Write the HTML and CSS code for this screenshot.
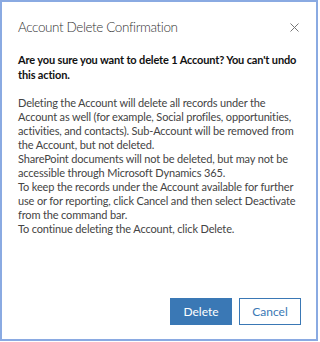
FILE: index.html
```html
<!DOCTYPE html>
<html lang="en">
<head>
  <meta charset="UTF-8" />
  <title>Account Delete Confirmation</title>
  <link rel="stylesheet" href="styles.css">
</head>
<body>
  <div class="dialog">
    <div class="dialog-header">
      <h1 class="dialog-title">Account Delete Confirmation</h1>
      <button class="close-btn" aria-label="Close">
        <svg width="9" height="9" viewBox="0 0 9 9">
          <path d="M0.5 0.5 L8.5 8.5 M8.5 0.5 L0.5 8.5" stroke="#777" stroke-width="1" fill="none" />
        </svg>
      </button>
    </div>
    <p class="question">Are you sure you want to delete 1 Account? You can't undo<br>this action.</p>
    <p class="details">
      Deleting the Account will delete all records under the<br>
      Account as well (for example, Social profiles, opportunities,<br>
      activities, and contacts). Sub-Account will be removed from<br>
      the Account, but not deleted.<br>
      SharePoint documents will not be deleted, but may not be<br>
      accessible through Microsoft Dynamics 365.<br>
      To keep the records under the Account available for further<br>
      use or for reporting, click Cancel and then select Deactivate<br>
      from the command bar.<br>
      To continue deleting the Account, click Delete.
    </p>
    <div class="actions">
      <button class="btn btn-primary">Delete</button>
      <button class="btn btn-secondary">Cancel</button>
    </div>
  </div>
</body>
</html>
```

FILE: styles.css
```css
* {
  box-sizing: border-box;
}
body {
  margin: 0;
  font-family: Lato, "Liberation Sans", sans-serif;
  color: #333;
  background: #fff;
}
.dialog {
  width: 318px;
  height: 341px;
  border: 2px solid #8aaae2;
  padding: 0 15px 0 16px;
  display: flex;
  flex-direction: column;
}
.dialog-header {
  display: flex;
  align-items: center;
  justify-content: space-between;
  height: 50px;
}
.dialog-title {
  margin: 0;
  font-size: 13.5px;
  font-weight: 300;
  letter-spacing: -0.4px;
  color: #333;
  white-space: nowrap;
}
.close-btn {
  background: none;
  border: none;
  padding: 0;
  margin-right: 2px;
  width: 9px;
  height: 9px;
  display: flex;
}
.question {
  margin: 0;
  font-size: 11px;
  font-weight: bold;
  letter-spacing: -0.15px;
  line-height: 15px;
  color: #111;
  white-space: nowrap;
}
.details {
  margin: 14px 0 0;
  font-size: 11px;
  letter-spacing: -0.15px;
  line-height: 14px;
  color: #444;
  white-space: nowrap;
}
.actions {
  margin-top: auto;
  margin-bottom: 14px;
  display: flex;
  justify-content: flex-end;
  gap: 7px;
}
.btn {
  width: 62px;
  height: 27px;
  font-family: inherit;
  font-size: 12px;
  border: 1px solid #3a78b5;
  cursor: pointer;
}
.btn-primary {
  background: #3a78b5;
  color: #fff;
}
.btn-secondary {
  background: #fff;
  color: #3a78b5;
}
```
